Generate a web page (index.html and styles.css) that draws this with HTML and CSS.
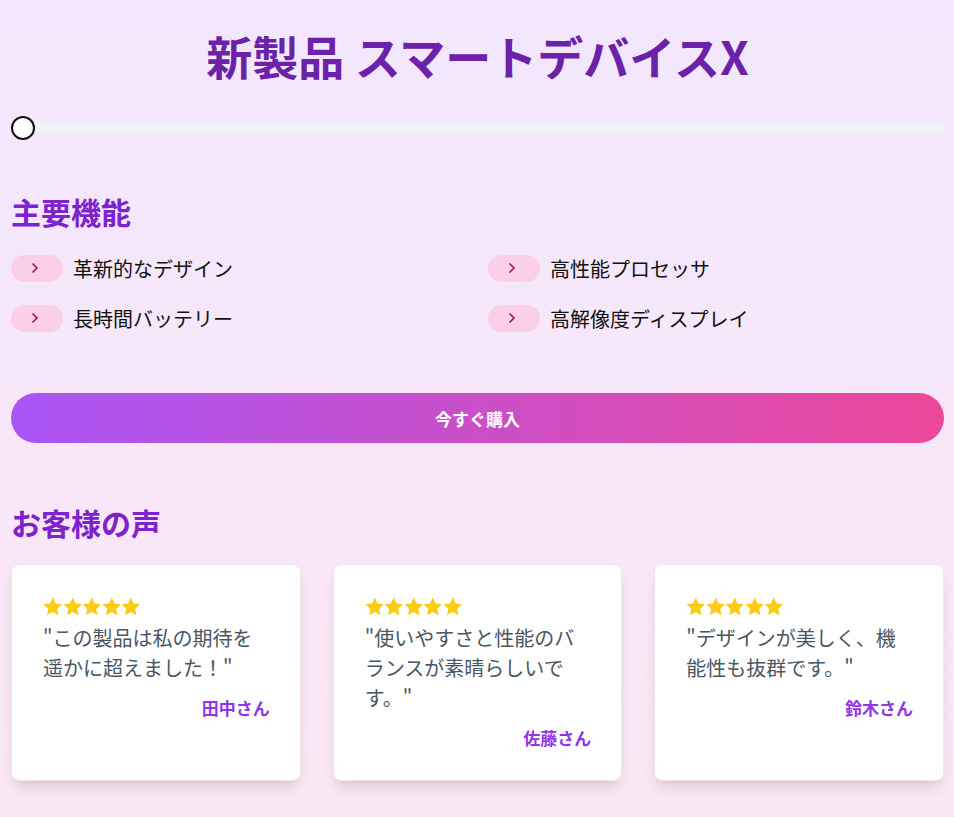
FILE: index.html
```html
<!DOCTYPE html>
<html lang="ja">
<head>
    <meta charset="UTF-8">
    <meta name="viewport" content="width=device-width, initial-scale=1.0">
    <title>新製品 スマートデバイスX</title>
    <link rel="stylesheet" href="styles.css">
</head>
<body>
    <div class="page">
        <h1 class="title">新製品 スマートデバイスX</h1>

        <input class="slider" type="range" min="0" max="100" value="0">

        <h2 class="section-title features-title">主要機能</h2>
        <ul class="features">
            <li class="feature">
                <span class="badge"><svg width="8" height="12" viewBox="0 0 8 12"><path d="M1.5 1.5 L6 6 L1.5 10.5" fill="none" stroke="#9d174d" stroke-width="1.6"/></svg></span>
                革新的なデザイン
            </li>
            <li class="feature">
                <span class="badge"><svg width="8" height="12" viewBox="0 0 8 12"><path d="M1.5 1.5 L6 6 L1.5 10.5" fill="none" stroke="#9d174d" stroke-width="1.6"/></svg></span>
                高性能プロセッサ
            </li>
            <li class="feature">
                <span class="badge"><svg width="8" height="12" viewBox="0 0 8 12"><path d="M1.5 1.5 L6 6 L1.5 10.5" fill="none" stroke="#9d174d" stroke-width="1.6"/></svg></span>
                長時間バッテリー
            </li>
            <li class="feature">
                <span class="badge"><svg width="8" height="12" viewBox="0 0 8 12"><path d="M1.5 1.5 L6 6 L1.5 10.5" fill="none" stroke="#9d174d" stroke-width="1.6"/></svg></span>
                高解像度ディスプレイ
            </li>
        </ul>

        <button class="buy-button">今すぐ購入</button>

        <h2 class="section-title reviews-title">お客様の声</h2>
        <div class="reviews">
            <div class="review-card">
                <div class="stars">
                    <svg class="star" viewBox="0.7 0.7 18.6 18.6"><path d="M10 1.2l2.7 5.6 6.1.8-4.5 4.3 1.1 6.1L10 15.1 4.6 18l1.1-6.1L1.2 7.6l6.1-.8z"/></svg>
                    <svg class="star" viewBox="0.7 0.7 18.6 18.6"><path d="M10 1.2l2.7 5.6 6.1.8-4.5 4.3 1.1 6.1L10 15.1 4.6 18l1.1-6.1L1.2 7.6l6.1-.8z"/></svg>
                    <svg class="star" viewBox="0.7 0.7 18.6 18.6"><path d="M10 1.2l2.7 5.6 6.1.8-4.5 4.3 1.1 6.1L10 15.1 4.6 18l1.1-6.1L1.2 7.6l6.1-.8z"/></svg>
                    <svg class="star" viewBox="0.7 0.7 18.6 18.6"><path d="M10 1.2l2.7 5.6 6.1.8-4.5 4.3 1.1 6.1L10 15.1 4.6 18l1.1-6.1L1.2 7.6l6.1-.8z"/></svg>
                    <svg class="star" viewBox="0.7 0.7 18.6 18.6"><path d="M10 1.2l2.7 5.6 6.1.8-4.5 4.3 1.1 6.1L10 15.1 4.6 18l1.1-6.1L1.2 7.6l6.1-.8z"/></svg>
                </div>
                <p class="review-text">"この製品は私の期待を遥かに超えました！"</p>
                <div class="reviewer">田中さん</div>
            </div>
            <div class="review-card">
                <div class="stars">
                    <svg class="star" viewBox="0.7 0.7 18.6 18.6"><path d="M10 1.2l2.7 5.6 6.1.8-4.5 4.3 1.1 6.1L10 15.1 4.6 18l1.1-6.1L1.2 7.6l6.1-.8z"/></svg>
                    <svg class="star" viewBox="0.7 0.7 18.6 18.6"><path d="M10 1.2l2.7 5.6 6.1.8-4.5 4.3 1.1 6.1L10 15.1 4.6 18l1.1-6.1L1.2 7.6l6.1-.8z"/></svg>
                    <svg class="star" viewBox="0.7 0.7 18.6 18.6"><path d="M10 1.2l2.7 5.6 6.1.8-4.5 4.3 1.1 6.1L10 15.1 4.6 18l1.1-6.1L1.2 7.6l6.1-.8z"/></svg>
                    <svg class="star" viewBox="0.7 0.7 18.6 18.6"><path d="M10 1.2l2.7 5.6 6.1.8-4.5 4.3 1.1 6.1L10 15.1 4.6 18l1.1-6.1L1.2 7.6l6.1-.8z"/></svg>
                    <svg class="star" viewBox="0.7 0.7 18.6 18.6"><path d="M10 1.2l2.7 5.6 6.1.8-4.5 4.3 1.1 6.1L10 15.1 4.6 18l1.1-6.1L1.2 7.6l6.1-.8z"/></svg>
                </div>
                <p class="review-text">"使いやすさと性能のバランスが素晴らしいです。"</p>
                <div class="reviewer">佐藤さん</div>
            </div>
            <div class="review-card">
                <div class="stars">
                    <svg class="star" viewBox="0.7 0.7 18.6 18.6"><path d="M10 1.2l2.7 5.6 6.1.8-4.5 4.3 1.1 6.1L10 15.1 4.6 18l1.1-6.1L1.2 7.6l6.1-.8z"/></svg>
                    <svg class="star" viewBox="0.7 0.7 18.6 18.6"><path d="M10 1.2l2.7 5.6 6.1.8-4.5 4.3 1.1 6.1L10 15.1 4.6 18l1.1-6.1L1.2 7.6l6.1-.8z"/></svg>
                    <svg class="star" viewBox="0.7 0.7 18.6 18.6"><path d="M10 1.2l2.7 5.6 6.1.8-4.5 4.3 1.1 6.1L10 15.1 4.6 18l1.1-6.1L1.2 7.6l6.1-.8z"/></svg>
                    <svg class="star" viewBox="0.7 0.7 18.6 18.6"><path d="M10 1.2l2.7 5.6 6.1.8-4.5 4.3 1.1 6.1L10 15.1 4.6 18l1.1-6.1L1.2 7.6l6.1-.8z"/></svg>
                    <svg class="star" viewBox="0.7 0.7 18.6 18.6"><path d="M10 1.2l2.7 5.6 6.1.8-4.5 4.3 1.1 6.1L10 15.1 4.6 18l1.1-6.1L1.2 7.6l6.1-.8z"/></svg>
                </div>
                <p class="review-text">"デザインが美しく、機能性も抜群です。"</p>
                <div class="reviewer">鈴木さん</div>
            </div>
        </div>
    </div>
</body>
</html>
```

FILE: styles.css
```css
html {
    background: linear-gradient(to bottom, #f2e7fe, #fce7f4);
    min-height: 100%;
}
body {
    margin: 0;
    font-family: "Noto Sans CJK JP", "Noto Sans", sans-serif;
    color: #1f2937;
}
.page {
    padding: 28px 10px 40px 11px;
}
.title {
    margin: 0;
    font-size: 46px;
    line-height: 54px;
    font-weight: 700;
    color: #6b21a8;
    text-align: center;
}
.slider {
    -webkit-appearance: none;
    appearance: none;
    display: block;
    width: 100%;
    height: 24px;
    margin: 34px 0 0 0;
    background: transparent;
}
.slider::-webkit-slider-runnable-track {
    height: 10px;
    background: #f3f3f4;
    border-radius: 5px;
}
.slider::-webkit-slider-thumb {
    -webkit-appearance: none;
    width: 24px;
    height: 24px;
    margin-top: -7px;
    border-radius: 50%;
    background: #fff;
    border: 2px solid #111;
    box-sizing: border-box;
}
.section-title {
    margin: 0;
    font-size: 30px;
    line-height: 36px;
    font-weight: 700;
    color: #7e22ce;
}
.features-title {
    margin-top: 53px;
}
.features {
    list-style: none;
    margin: 24px 0 0 0;
    padding: 0;
    display: grid;
    grid-template-columns: 1fr 1fr;
    row-gap: 20px;
    column-gap: 21px;
}
.feature {
    display: flex;
    align-items: center;
    gap: 10px;
    height: 30px;
    font-size: 20px;
    color: #111;
}
.badge {
    width: 52px;
    height: 27px;
    border-radius: 14px;
    background-color: #fbcfe8;
    display: flex;
    align-items: center;
    justify-content: center;
    padding-right: 4px;
    box-sizing: border-box;
}
.buy-button {
    display: block;
    width: 100%;
    height: 50px;
    margin-top: 60px;
    border: none;
    border-radius: 25px;
    background: linear-gradient(to right, #a855f7, #ec4899);
    color: #fff;
    font-family: inherit;
    font-size: 17px;
    font-weight: 700;
    cursor: pointer;
}
.reviews-title {
    margin-top: 61px;
}
.reviews {
    display: grid;
    grid-template-columns: repeat(3, 1fr);
    gap: 32px;
    margin-top: 24px;
}
.review-card {
    background: #fff;
    border-radius: 8px;
    padding: 32px 30px 30px 31px;
    box-shadow: 0 10px 15px -3px rgba(0, 0, 0, 0.1), 0 4px 6px -4px rgba(0, 0, 0, 0.1);
    border: 1px solid #ece6ee;
}
.stars {
    display: flex;
    height: 20px;
}
.star {
    width: 19.5px;
    height: 19.5px;
    fill: #facc15;
}
.review-text {
    margin: 6px 0 0 0;
    font-size: 20px;
    line-height: 30px;
    color: #4b5563;
}
.reviewer {
    margin-top: 13px;
    text-align: right;
    font-size: 17px;
    line-height: 24px;
    font-weight: 700;
    color: #9333ea;
}
```
